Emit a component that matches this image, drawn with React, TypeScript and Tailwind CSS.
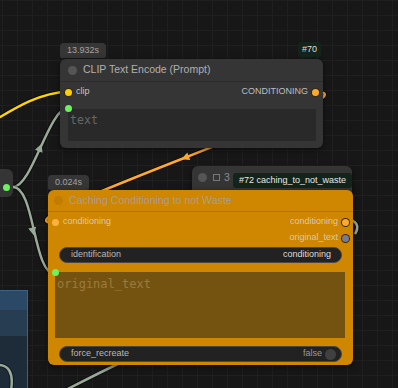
import React from "react";

const ui = { fontFamily: '"Liberation Sans", Arial, sans-serif' };
const mono = { fontFamily: '"DejaVu Sans Mono", "Liberation Mono", monospace' };

const Arrow = ({ x, y, a, color }: { x: number; y: number; a: number; color: string }) => (
  <polygon points="4.5,0 -3.5,-4 -3.5,4" fill={color} transform={`translate(${x} ${y}) rotate(${a})`} />
);

const Link = ({ d, color }: { d: string; color: string }) => (
  <>
    <path d={d} stroke="rgba(0,0,0,0.45)" strokeWidth={4.5} fill="none" />
    <path d={d} stroke={color} strokeWidth={2.5} fill="none" />
  </>
);

const Dot = ({ color, ring }: { color: string; ring?: boolean }) => (
  <span
    className={`block w-[7px] h-[7px] rounded-full shrink-0 ${ring ? "ring-1 ring-[#3a2a00]" : ""}`}
    style={{ background: color }}
  />
);

const Links = () => (
  <svg className="absolute inset-0" width={398} height={388}>
    <Link d="M-30,135 C5,115 35,92 68,92" color="#ffd500" />
    <Link d="M13,187 C32,187 49,108 68,108" color="#9aaa99" />
    <Arrow x={40} y={148} a={-69} color="#9aaa99" />
    <Link d="M13,187 C35,187 33,274 55,274" color="#9aaa99" />
    <Arrow x={33} y={231} a={77} color="#9aaa99" />
    <Link d="M316,92 C389,92 -18,223 55,223" color="#ffa931" />
    <Arrow x={185.5} y={157.5} a={158.6} color="#ffa931" />
    <Link d="M351,220 Q361,224 355,234" color="#9aaa99" />
    <Link d="M58,394 C85,380 105,370 130,358" color="#9aaa99" />
    <Link d="M-2,365 C8,365 14,372 11,390" color="#9aaa99" />
  </svg>
);

const Pill = ({ label, value, toggle }: { label: string; value: string; toggle?: boolean }) => (
  <div className="mx-[11px] h-[16px] rounded-full bg-[#222] border border-[#474747] flex items-center justify-between pl-[11px] pr-[10px] text-[9px]">
    <span className="text-[#b8b8b8]">{label}</span>
    <span className="flex items-center gap-[3px] text-[#dcdcdc]">
      {toggle ? <span className="text-[#9a9a9a]">{value}</span> : value}
      {toggle && <span className="w-[11px] h-[11px] rounded-full bg-[#404040] -mr-[5px]" />}
    </span>
  </div>
);

export default function App() {
  return (
    <div
      className="relative w-[398px] h-[388px] overflow-hidden bg-[#171717] bg-[linear-gradient(to_right,#1f1f1f_1px,transparent_1px),linear-gradient(to_bottom,#1f1f1f_1px,transparent_1px)] bg-[size:15px_15px] bg-[position:2px_0px]"
      style={ui}
    >
      {/* group */}
      <div className="absolute left-[-2px] top-[290px] w-[30px] h-[110px] border-t border-r border-[#3b6283] bg-[#1e2c3a] flex flex-col">
        <div className="h-[19px] bg-[#2b4966]" />
        <div className="h-[26px] bg-[#263d52]" />
      </div>

      <Links />

      {/* left node stub */}
      <div className="absolute left-[-6px] top-[169px] w-[19px] h-[28px] rounded-[6px] bg-[#353535] flex items-center pl-[9px] pt-[8px]">
        <Dot color="#6cf25c" />
      </div>

      {/* node #72 behind */}
      <div className="absolute left-[192px] top-[166px] w-[160px] h-[40px] rounded-t-[6px] bg-[#353535] shadow-[0_2px_6px_rgba(0,0,0,0.5)]">
        <div className="h-[23px] flex items-center pl-[6px] gap-[4px] text-[10.5px] text-[#8a8a8a]">
          <span className="w-[9px] h-[9px] rounded-full bg-[#555]" />
          <span className="w-[7px] h-[7px] border border-[#777] ml-[2px]" />
          <span>3</span>
        </div>
      </div>
      <div className="absolute left-[233px] top-[173px] h-[15px] px-[6px] rounded-[3px] bg-[#13241a] text-[9px] text-[#e8e8e8] flex items-center">
        #72 caching_to_not_waste
      </div>

      {/* CLIP Text Encode */}
      <div className="absolute left-[60px] top-[43px] w-[46px] h-[15px] rounded-t-[4px] rounded-b-[2px] bg-[#363636] text-[9px] text-[#a2a2a2] flex items-center justify-center">
        13.932s
      </div>
      <div className="absolute left-[298px] top-[42px] w-[23px] h-[15px] rounded-[3px] bg-[#13241a] text-[9px] text-[#dedede] flex items-center justify-center">
        #70
      </div>
      <div className="absolute left-[60px] top-[59px] w-[263px] h-[89px] rounded-[6px] bg-[#353535] shadow-[0_2px_6px_rgba(0,0,0,0.5)] flex flex-col">
        <div className="h-[23px] flex items-center gap-[6px] pl-[8px] border-b border-[#2c2c2c] shrink-0">
          <span className="w-[9px] h-[9px] rounded-full bg-[#555]" />
          <span className="text-[10.5px] text-[#b0b0b0]">CLIP Text Encode (Prompt)</span>
        </div>
        <div className="h-[16px] mt-[2px] flex items-center justify-between pl-[5px] pr-[4px] text-[9px]">
          <span className="flex items-center gap-[4px] text-[#c4c4c4]">
            <Dot color="#ffd000" ring />
            clip
          </span>
          <span className="flex items-center gap-[4px] text-[#bdbdbd]">
            CONDITIONING
            <Dot color="#ffa931" ring />
          </span>
        </div>
        <div className="relative mt-[9px] ml-[8px] mr-[7px] h-[32px] bg-[#292929] pl-[2px] pt-[4px]">
          <span className="absolute -left-[3.5px] -top-[4px]">
            <Dot color="#6cf25c" />
          </span>
          <div className="text-[11.6px] leading-[14px] text-[#666]" style={mono}>
            text
          </div>
        </div>
      </div>

      {/* Caching node */}
      <div className="absolute left-[48px] top-[175px] w-[41px] h-[15px] rounded-t-[4px] rounded-b-[2px] bg-[#363636] text-[9px] text-[#a2a2a2] flex items-center justify-center">
        0.024s
      </div>
      <div className="absolute left-[48px] top-[190px] w-[305px] h-[175px] rounded-[6px] bg-[#cf8600] shadow-[0_2px_6px_rgba(0,0,0,0.5)] flex flex-col">
        <div className="h-[22px] flex items-center gap-[6px] pl-[6px] border-b border-[#b07200] shrink-0">
          <span className="w-[9px] h-[9px] rounded-full bg-[#c27d00]" />
          <span className="text-[10.6px] text-[#a99f8e]">Caching Conditioning to not Waste</span>
        </div>
        <div className="h-[16px] mt-[2px] flex items-center justify-between pl-[4px] pr-[4px] text-[9px] text-[#d6c8b0]">
          <span className="flex items-center gap-[4px]">
            <Dot color="#ffb040" />
            conditioning
          </span>
          <span className="flex items-center gap-[4px]">
            conditioning
            <Dot color="#ffa931" ring />
          </span>
        </div>
        <div className="h-[16px] flex items-center justify-end pr-[4px] text-[9px] text-[#d6c8b0]">
          <span className="flex items-center gap-[4px]">
            original_text
            <Dot color="#777a92" ring />
          </span>
        </div>
        <div className="mt-[1px]">
          <Pill label="identification" value="conditioning" />
        </div>
        <div className="relative mt-[9px] ml-[7px] mr-[8px] h-[66px] bg-[#745311] pl-[2px] pt-[5px]">
          <span className="absolute -left-[3.5px] -top-[3.5px]">
            <Dot color="#6cf25c" />
          </span>
          <div className="text-[12px] leading-[14px] text-[#9b7b3a]" style={mono}>
            original_text
          </div>
        </div>
        <div className="mt-[8px]">
          <Pill label="force_recreate" value="false" toggle />
        </div>
      </div>
    </div>
  );
}
